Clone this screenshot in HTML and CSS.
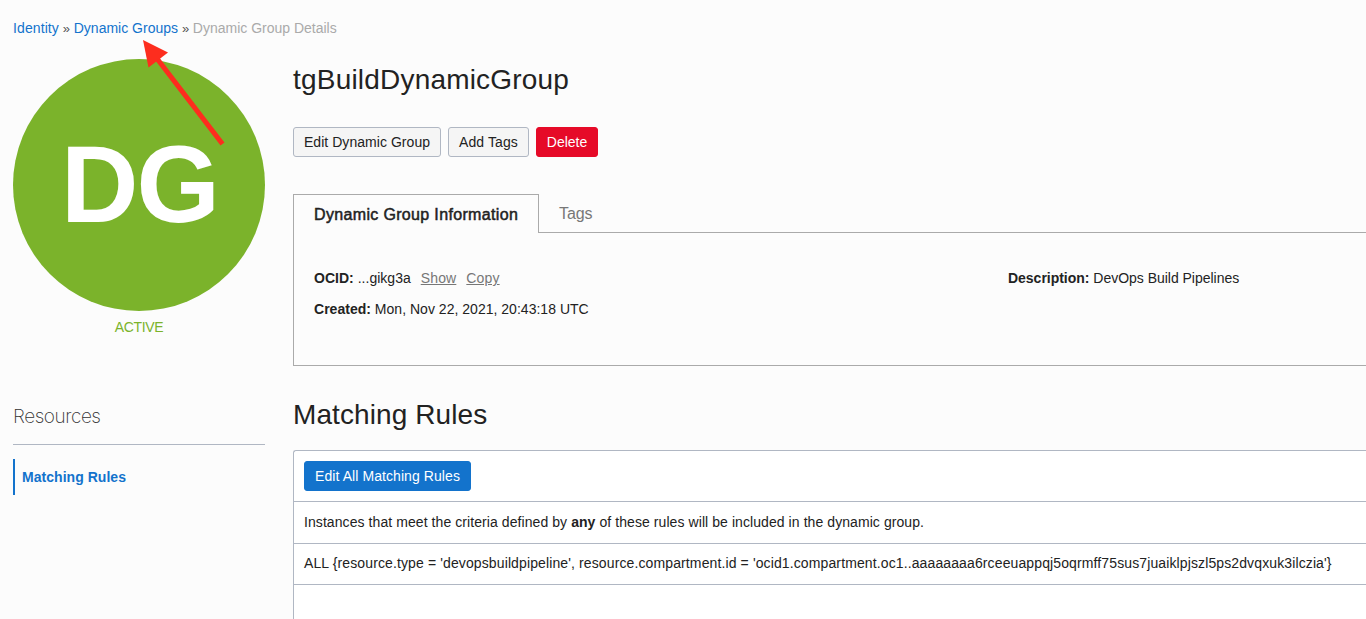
FILE: index.html
```html
<!DOCTYPE html>
<html lang="en">
<head>
<meta charset="utf-8">
<title>Dynamic Group Details</title>
<link rel="stylesheet" href="styles.css">
</head>
<body>
<div class="page">
  <nav class="breadcrumb"><a class="identity">Identity</a> <span class="sep">»</span> <a>Dynamic Groups</a> <span class="sep">»</span> <span class="current">Dynamic Group Details</span></nav>
  <div class="columns">
    <aside class="side">
      <div class="avatar"><span class="initials">DG</span></div>
      <div class="status">ACTIVE</div>
      <h3 class="res-title">Resources</h3>
      <a class="res-item">Matching Rules</a>
    </aside>
    <main class="main">
      <h1 class="title">tgBuildDynamicGroup</h1>
      <div class="actions">
        <button class="btn b1">Edit Dynamic Group</button>
        <button class="btn b2">Add Tags</button>
        <button class="btn danger">Delete</button>
      </div>
      <div class="tabs">
        <div class="tab active"><span class="tab-label">Dynamic Group Information</span></div>
        <div class="tab rest"><span>Tags</span></div>
      </div>
      <section class="info">
        <div class="info-left">
          <div><b>OCID:</b> ...gikg3a <a class="link show">Show</a><a class="link">Copy</a></div>
          <div><b>Created:</b> Mon, Nov 22, 2021, 20:43:18 UTC</div>
        </div>
        <div class="info-right"><b>Description:</b> DevOps Build Pipelines</div>
      </section>
      <h2 class="title rules-title">Matching Rules</h2>
      <section class="rules">
        <div class="toolbar"><button class="btn primary">Edit All Matching Rules</button></div>
        <div class="row"><span>Instances that meet the criteria defined by <b>any</b> of these rules will be included in the dynamic group.</span></div>
        <div class="row rule"><span>ALL {resource.type = 'devopsbuildpipeline', resource.compartment.id = 'ocid1.compartment.oc1..aaaaaaaa6rceeuappqj5oqrmff75sus7juaiklpjszl5ps2dvqxuk3ilczia'}</span></div>
      </section>
    </main>
  </div>
  <svg class="arrow" width="90" height="116" viewBox="0 0 90 116"><path d="M82.500 105L15 17" fill="none" stroke="#fd2d1e" stroke-width="5"/><path d="M3 1L28 13.500L8.500 28.500Z" fill="#fd2d1e"/></svg>
</div>
</body>
</html>
```
FILE: styles.css
```css
* { box-sizing: border-box; }
body { margin: 0; background: #fcfcfc; color: #222; font: 14px/20px "Liberation Sans", Arial, sans-serif; overflow: hidden; }
.page { position: relative; width: 1366px; height: 619px; overflow: hidden; padding: 18px 0 0 13px; white-space: nowrap; }
.breadcrumb { height: 41px; }
.breadcrumb a { color: #1373cc; }
.breadcrumb .identity { letter-spacing: .1px; }
.sep { display: inline-block; width: 7px; font-size: 13px; color: #555; }
.breadcrumb .current { color: #aaa; }
.columns { display: flex; gap: 28px; }
.side { width: 252px; flex: none; }
.avatar { width: 252px; height: 252px; border-radius: 50%; background: #7bb32b; display: flex; align-items: center; justify-content: center; }
.initials { padding-bottom: 2px; color: #fff; font-weight: bold; font-size: 110px; line-height: 1; letter-spacing: -2px; transform: scaleX(.975); }
.status { margin-top: 6px; text-align: center; color: #7bb32b; letter-spacing: -.35px; }
.res-title { margin: 67px 0 0; height: 41px; padding-top: 2px; border-bottom: 1px solid #b0b7c3; font-family: Inter, "Liberation Sans", sans-serif; font-size: 19px; font-weight: 200; letter-spacing: -.45px; line-height: 22px; color: #333; }
.res-item { display: block; height: 36px; margin-top: 14px; padding-left: 7px; border-left: 2px solid #1373cc; color: #1373cc; font-weight: bold; line-height: 36px; letter-spacing: .04px; }
.main { flex: 1; min-width: 0; }
.title { margin: 0; padding-top: 1px; height: 40px; font-size: 28px; font-weight: 400; line-height: 40px; letter-spacing: .2px; }
.actions { display: flex; gap: 7px; margin-top: 28px; }
.btn { height: 30px; padding: 0; border: 1px solid #b0b7c3; border-radius: 3px; background: #f5f5f5; color: #222; font: inherit; }
.b1 { width: 148px; letter-spacing: .05px; }
.b2 { width: 81px; letter-spacing: .1px; }
.danger { width: 62px; background: #e60a28; border-color: #e60a28; color: #fff; }
.tabs { display: flex; margin-top: 37px; height: 39px; font-size: 16px; }
.tab { height: 39px; line-height: 40px; }
.active { width: 246px; padding-left: 20px; border: 1px solid #aaa; border-bottom: 0; }
.tab-label { letter-spacing: .34px; -webkit-text-stroke: .5px #222; }
.rest { flex: 1; padding-left: 20px; border-bottom: 1px solid #aaa; color: #777; letter-spacing: -.1px; }
.info { display: flex; height: 133px; padding: 35px 0 0 20px; border-left: 1px solid #aaa; border-bottom: 1px solid #aaa; }
.info-left { width: 694px; display: flex; flex-direction: column; gap: 11px; letter-spacing: .02px; }
.info-right { letter-spacing: -.02px; }
.link { color: #777; text-decoration: underline; letter-spacing: .15px; }
.show { margin: 0 10px 0 6px; }
.rules-title { margin-top: 28px; letter-spacing: .1px; }
.rules { margin-top: 16px; height: 180px; border: 1px solid #b0b7c3; border-right: 0; border-radius: 3px 0 0 0; background: #fff; }
.toolbar { height: 50px; padding: 10px; }
.primary { width: 167px; display: block; background: #1373cc; border-color: #1373cc; color: #fff; letter-spacing: .08px; }
.row { height: 42px; line-height: 41px; padding-left: 10px; border-top: 1px solid #b0b7c3; letter-spacing: .075px; }
.rule { line-height: 39px; border-bottom: 1px solid #b0b7c3; letter-spacing: .118px; }
.arrow { position: absolute; left: 140px; top: 39px; }
```
